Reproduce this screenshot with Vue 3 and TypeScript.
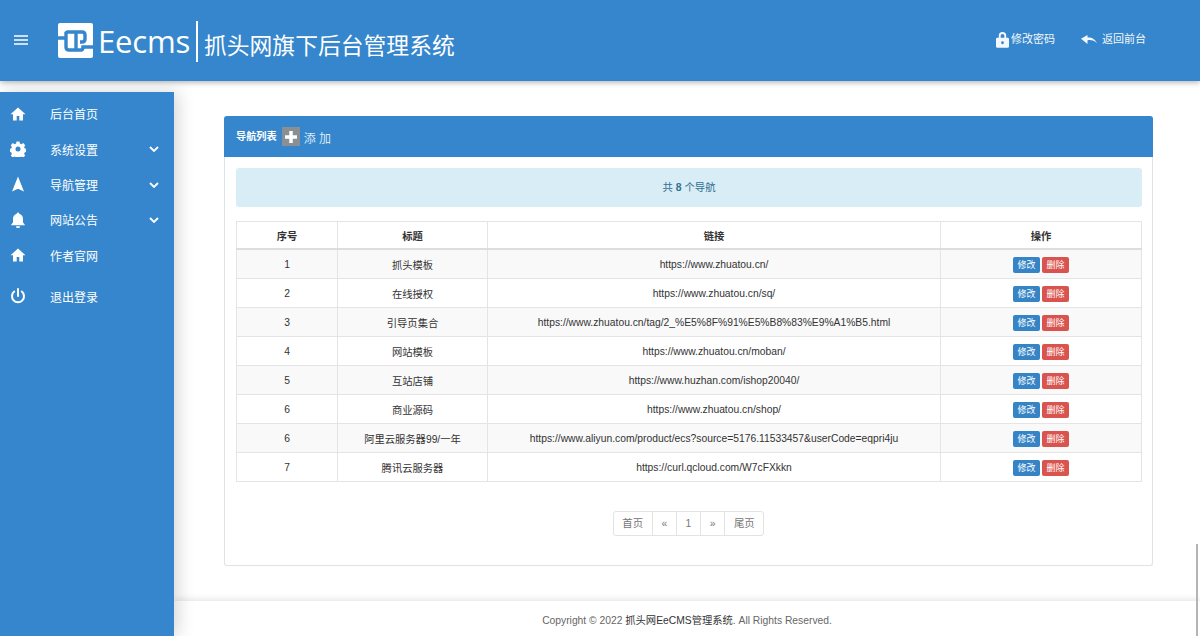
<script setup lang="ts">
interface NavRow {
  id: number
  title: string
  url: string
}

interface MenuItem {
  label: string
  icon: string
  arrow?: boolean
}

const menu: MenuItem[] = [
  { label: '后台首页', icon: 'home' },
  { label: '系统设置', icon: 'gear', arrow: true },
  { label: '导航管理', icon: 'nav', arrow: true },
  { label: '网站公告', icon: 'bell', arrow: true },
  { label: '作者官网', icon: 'home' },
]

const rows: NavRow[] = [
  { id: 1, title: '抓头模板', url: 'https://www.zhuatou.cn/' },
  { id: 2, title: '在线授权', url: 'https://www.zhuatou.cn/sq/' },
  { id: 3, title: '引导页集合', url: 'https://www.zhuatou.cn/tag/2_%E5%8F%91%E5%B8%83%E9%A1%B5.html' },
  { id: 4, title: '网站模板', url: 'https://www.zhuatou.cn/moban/' },
  { id: 5, title: '互站店铺', url: 'https://www.huzhan.com/ishop20040/' },
  { id: 6, title: '商业源码', url: 'https://www.zhuatou.cn/shop/' },
  { id: 6, title: '阿里云服务器99/一年', url: 'https://www.aliyun.com/product/ecs?source=5176.11533457&userCode=eqpri4ju' },
  { id: 7, title: '腾讯云服务器', url: 'https://curl.qcloud.com/W7cFXkkn' },
]

const pager = ['首页', '«', '1', '»', '尾页']
</script>

<template>
  <div class="page">
    <header class="topbar">
      <div class="topbar-left">
        <svg class="burger" viewBox="0 0 14 10" width="14" height="10">
          <path d="M0 1h14M0 5h14M0 9h14" stroke="#fff" stroke-width="1.500" />
        </svg>
        <div class="logo">
          <svg class="logo-mark" viewBox="0 0 35 35" width="35" height="35">
            <rect width="35" height="35" rx="2" fill="#fff" />
            <path
              d="M0 15H8M8 11Q8 9 10 9H24Q27 9 27 12V16Q27 19 24 19H22M18 9V27M8 9V24Q8 27 11 27H23Q25 27 25 24H35"
              fill="none"
              stroke="#3586cc"
              stroke-width="3.400"
            />
          </svg>
          <span class="logo-word">Eecms</span>
          <span class="logo-bar"></span>
          <span class="logo-title">抓头网旗下后台管理系统</span>
        </div>
      </div>
      <div class="topbar-right">
        <a class="top-link first">
          <svg viewBox="0 0 14 18" width="13" height="17">
            <path
              fill="#fff"
              fill-rule="evenodd"
              d="M3 7V5a4 4 0 0 1 8 0v2h1.500A1.500 1.500 0 0 1 14 8.500v8a1.500 1.500 0 0 1-1.500 1.500h-11A1.500 1.500 0 0 1 0 16.500v-8A1.500 1.500 0 0 1 1.500 7ZM5 7h4V5a2 2 0 0 0-4 0ZM7 11a1.500 1.500 0 1 0 0 3 1.500 1.500 0 0 0 0-3Z"
            />
          </svg>
          修改密码
        </a>
        <a class="top-link">
          <svg viewBox="0 0 16 9" width="16" height="9">
            <path fill="#fff" d="M6.500 2.500C10 2 14 3.500 16 8.500c-2.500-3-5.500-3.700-9.500-3.300V9L0 3.700 6.500 0Z" />
          </svg>
          返回前台
        </a>
      </div>
    </header>

    <div class="body">
      <aside class="sidebar">
        <ul class="menu">
          <li v-for="item in menu" :key="item.label" class="menu-item">
            <svg class="menu-icon" viewBox="0 0 16 16" width="16" height="16">
              <path v-if="item.icon === 'home'" fill="#fff" d="M8 1.500 0.500 8.300H3V14.500h3.700V10h2.600v4.500H13V8.300h2.500Z" />
              <path
                v-else-if="item.icon === 'gear'"
                fill="#fff"
                fill-rule="evenodd"
                d="M6.500 0.500h3l.4 2 1.500.7 1.800-1.100 2 2.100-1.100 1.700.7 1.600 2 .4v3l-2 .4-.7 1.600 1.100 1.700-2 2.100-1.800-1.100-1.500.7-.4 2h-3l-.4-2-1.500-.7-1.800 1.100-2-2.100 1.100-1.700-.7-1.600-2-.4v-3l2-.4.700-1.600-1.100-1.700 2-2.100 1.800 1.100 1.500-.7ZM8 5.500a2.500 2.500 0 1 0 0 5 2.500 2.500 0 0 0 0-5Z"
              />
              <path v-else-if="item.icon === 'nav'" fill="#fff" d="M8 0.500 14 15.500 8 12.800 2 15.500Z" />
              <path
                v-else
                fill="#fff"
                d="M8 0.500a1.200 1.200 0 0 1 1.200 1.300C11.500 2.400 13 4.300 13 7v3.500l1.700 2v.8H1.300v-.8l1.700-2V7c0-2.700 1.500-4.600 3.800-5.200A1.200 1.200 0 0 1 8 0.500ZM6 14.300h4a2 2 0 0 1-4 0Z"
              />
            </svg>
            <span class="menu-label">{{ item.label }}</span>
            <svg v-if="item.arrow" class="menu-arrow" viewBox="0 0 10 6" width="10" height="6">
              <path d="M1 1l4 4 4-4" fill="none" stroke="#fff" stroke-width="1.800" />
            </svg>
          </li>
          <li class="menu-item logout">
            <svg class="menu-icon" viewBox="0 0 16 16" width="16" height="16">
              <path d="M8 1v7" stroke="#fff" stroke-width="2" stroke-linecap="round" fill="none" />
              <path d="M4.200 3.600a6 6 0 1 0 7.600 0" stroke="#fff" stroke-width="2" stroke-linecap="round" fill="none" />
            </svg>
            <span class="menu-label">退出登录</span>
          </li>
        </ul>
      </aside>

      <div class="content">
        <main class="main">
          <section class="panel">
            <div class="panel-head">
              <span class="panel-title">导航列表</span>
              <span class="add-icon">
                <svg viewBox="0 0 18 18" width="18" height="18">
                  <path d="M9 3v12M3 9h12" stroke="#fff" stroke-width="3.500" />
                </svg>
              </span>
              <span class="add-text">添 加</span>
            </div>
            <div class="panel-body">
              <div class="notice">共 <b>8</b> 个导航</div>
              <table class="grid">
                <colgroup>
                  <col class="col-id" />
                  <col class="col-title" />
                  <col />
                  <col class="col-op" />
                </colgroup>
                <thead>
                  <tr>
                    <th>序号</th>
                    <th>标题</th>
                    <th>链接</th>
                    <th>操作</th>
                  </tr>
                </thead>
                <tbody>
                  <tr v-for="row in rows" :key="row.url">
                    <td>{{ row.id }}</td>
                    <td>{{ row.title }}</td>
                    <td>{{ row.url }}</td>
                    <td>
                      <span class="btn blue">修改</span>
                      <span class="btn red">删除</span>
                    </td>
                  </tr>
                </tbody>
              </table>
              <ul class="pager">
                <li v-for="p in pager" :key="p">{{ p }}</li>
              </ul>
            </div>
          </section>
        </main>
        <footer class="footer">
          Copyright © 2022 <span class="dark">抓头网EeCMS管理系统</span>. All Rights Reserved.
        </footer>
      </div>
    </div>
    <div class="scroll-thumb"></div>
  </div>
</template>

<style>
html,
body {
  margin: 0;
  background: #fff;
  overflow: hidden;
}
</style>

<style scoped>
.page {
  width: 1200px;
  height: 636px;
  display: flex;
  flex-direction: column;
  font-family: 'Liberation Sans', 'Noto Sans CJK SC', sans-serif;
  font-size: 10px;
  color: #333;
  overflow: hidden;
  position: relative;
}

.scroll-thumb {
  position: absolute;
  right: 2px;
  top: 544px;
  bottom: 0;
  width: 2px;
  background: #b4b4b4;
  z-index: 3;
}

.topbar {
  height: 81px;
  flex: none;
  background: #3586cc;
  box-shadow: 0 1px 6px rgba(0, 0, 0, 0.35);
  display: flex;
  align-items: flex-start;
  justify-content: space-between;
  color: #fff;
  position: relative;
  z-index: 2;
}

.topbar-left {
  display: flex;
  align-items: center;
  padding-top: 20px;
}

.burger {
  margin: -3px 0 0 14px;
}

.logo {
  display: flex;
  align-items: center;
  margin-left: 30px;
}

.logo-mark {
  display: block;
  margin-top: -1px;
}

.logo-word {
  font-family: 'Open Sans', sans-serif;
  font-size: 31px;
  line-height: 42px;
  margin-left: 5px;
  letter-spacing: -0.2px;
}

.logo-bar {
  width: 2px;
  height: 41px;
  background: #fff;
  margin-left: 6px;
}

.logo-title {
  font-size: 22.800px;
  line-height: 30px;
  margin: 10px 0 0 6px;
}

.topbar-right {
  display: flex;
  align-items: center;
  padding: 30px 54px 0 0;
  font-size: 11px;
}

.top-link {
  display: flex;
  align-items: center;
  gap: 2px;
  color: #fff;
  line-height: 18px;
  opacity: 0.95;
}

.top-link.first {
  margin-right: 27px;
}

.top-link:first-child svg {
  margin-left: -2px;
}

.top-link:last-child svg {
  margin: 0 3px 0 -1px;
}

.body {
  flex: 1;
  display: flex;
  padding-top: 11px;
  min-height: 0;
}

.sidebar {
  width: 174px;
  flex: none;
  background: #3586cc;
  box-shadow: 4px 0 16px rgba(0, 0, 0, 0.16);
  position: relative;
  z-index: 1;
}

.menu {
  list-style: none;
  margin: 0;
  padding: 5px 0 0;
}

.menu-item {
  height: 35.400px;
  display: flex;
  align-items: center;
  color: #fff;
  font-size: 12px;
  position: relative;
  top: -1px;
}

.menu-item.logout {
  margin-top: 6px;
  height: 35px;
}

.menu-icon {
  margin-left: 10px;
  flex: none;
}

.menu-label {
  margin-left: 24px;
}

.menu-arrow {
  position: absolute;
  left: 149px;
  top: 15px;
}

.content {
  flex: 1;
  display: flex;
  flex-direction: column;
  min-width: 0;
}

.main {
  flex: 1;
  padding: 24px 47px 0 50px;
}

.panel {
  height: 450px;
  box-sizing: border-box;
  border: 1px solid #dde3e7;
  border-top: 0;
  border-radius: 3px;
  background: #fff;
}

.panel-head {
  height: 41px;
  margin: 0 -1px;
  background: #3586cc;
  border-radius: 3px 3px 0 0;
  display: flex;
  align-items: center;
  color: #fff;
  padding-left: 12px;
}

.panel-title {
  font-weight: 700;
  font-size: 10.200px;
  margin-top: -3px;
}

.add-icon {
  width: 18px;
  height: 19px;
  background: #8a8f94;
  margin-left: 5px;
  display: block;
}

.add-icon svg {
  display: block;
  margin-top: 1px;
}

.add-text {
  margin: 1px 0 0 4px;
  font-size: 12px;
  color: #dbe9f5;
}

.panel-body {
  padding: 11px 10px 0 11px;
}

.notice {
  height: 39px;
  line-height: 39px;
  text-align: center;
  background: #d9edf7;
  border-radius: 3px;
  color: #31708f;
  font-size: 10.400px;
}

.grid {
  width: 906px;
  margin-top: 14px;
  border-collapse: collapse;
  table-layout: fixed;
  font-size: 10.300px;
}

.col-id {
  width: 101px;
}

.col-title {
  width: 150px;
}

.col-op {
  width: 201px;
}

.grid th,
.grid td {
  border: 1px solid #e4e4e4;
  text-align: center;
  padding: 0;
  white-space: nowrap;
}

.grid th {
  height: 26px;
  border-bottom-width: 2px;
  border-bottom-color: #ddd;
  font-weight: 700;
}

.grid td {
  height: 27px;
  padding-top: 1px;
}

.grid tbody tr:nth-child(odd) {
  background: #f9f9f9;
}

.btn {
  display: inline-block;
  width: 27px;
  height: 16px;
  line-height: 16px;
  border-radius: 2px;
  color: #fff;
  font-size: 9px;
  margin: 0 1px;
  vertical-align: middle;
}

.btn.blue {
  background: #3584c6;
}

.btn.red {
  background: #d9534f;
}

.pager {
  list-style: none;
  display: flex;
  justify-content: center;
  margin: 29px 0 0;
  padding: 0;
}

.pager li {
  height: 23px;
  line-height: 23px;
  padding: 0 8.700px;
  border: 1px solid #e3e3e3;
  margin-left: -1px;
  color: #777;
  font-size: 10.400px;
  background: #fff;
}

.pager li:first-child {
  border-radius: 3px 0 0 3px;
}

.pager li:last-child {
  border-radius: 0 3px 3px 0;
}

.footer {
  height: 35px;
  flex: none;
  box-shadow: 0 -2px 6px rgba(0, 0, 0, 0.1);
  text-align: center;
  line-height: 40px;
  font-size: 10.300px;
  color: #666;
}

.dark {
  color: #333;
}
</style>
